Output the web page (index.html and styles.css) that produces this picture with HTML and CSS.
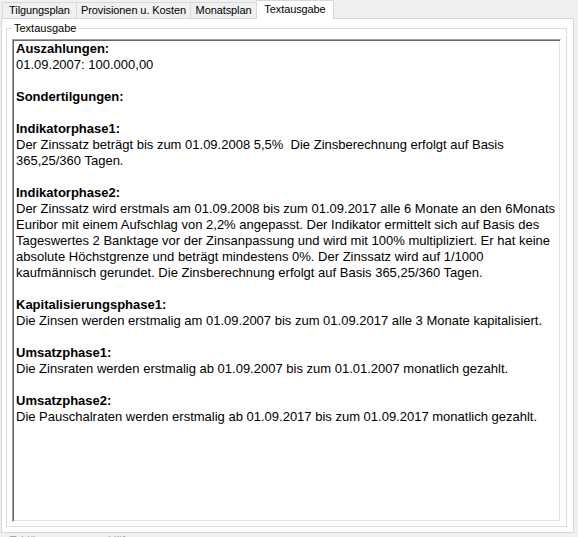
FILE: index.html
```html
<!DOCTYPE html>
<html>
<head>
<meta charset="utf-8">
<link rel="stylesheet" href="styles.css">
</head>
<body>
<div class="tabs">
  <div class="tab tab-tilgung">Tilgungsplan</div>
  <div class="tab tab-prov">Provisionen u. Kosten</div>
  <div class="tab tab-monat">Monatsplan</div>
  <div class="tab active">Textausgabe</div>
</div>
<div class="panel">
  <fieldset class="group">
    <legend>Textausgabe</legend>
    <div class="textbox"><b>Auszahlungen:</b>
01.09.2007: 100.000,00

<b>Sondertilgungen:</b>

<b>Indikatorphase1:</b>
Der Zinssatz beträgt bis zum 01.09.2008 5,5%  Die Zinsberechnung erfolgt auf Basis
365,25/360 Tagen.

<b>Indikatorphase2:</b>
Der Zinssatz wird erstmals am 01.09.2008 bis zum 01.09.2017 alle 6 Monate an den 6Monats
Euribor mit einem Aufschlag von 2,2% angepasst. Der Indikator ermittelt sich auf Basis des
Tageswertes 2 Banktage vor der Zinsanpassung und wird mit 100% multipliziert. Er hat keine
absolute Höchstgrenze und beträgt mindestens 0%. Der Zinssatz wird auf 1/1000
kaufmännisch gerundet. Die Zinsberechnung erfolgt auf Basis 365,25/360 Tagen.

<b>Kapitalisierungsphase1:</b>
Die Zinsen werden erstmalig am 01.09.2007 bis zum 01.09.2017 alle 3 Monate kapitalisiert.

<b>Umsatzphase1:</b>
Die Zinsraten werden erstmalig ab 01.09.2007 bis zum 01.01.2007 monatlich gezahlt.

<b>Umsatzphase2:</b>
Die Pauschalraten werden erstmalig ab 01.09.2017 bis zum 01.09.2017 monatlich gezahlt.</div>
  </fieldset>
</div>
<div class="footer"><span>Erklärungen</span><span>Hilfe</span></div>
</body>
</html>
```
FILE: styles.css
```css
html, body {
  margin: 0;
  padding: 0;
  background: #f0f0f0;
  font-family: "Liberation Sans", Arial, sans-serif;
  color: #000;
  overflow: hidden;
}
.tabs {
  display: flex;
  align-items: flex-end;
  height: 18px;
  padding-left: 2px;
}
.tab {
  height: 16px;
  line-height: 15px;
  font-size: 11px;
  letter-spacing: -0.1px;
  text-align: center;
  border: 1px solid #d9d9d9;
  border-bottom: none;
  border-right: none;
  background: #f0f0f0;
  box-sizing: border-box;
  white-space: nowrap;
}
.tab-tilgung { width: 74px; }
.tab-prov { width: 114px; }
.tab-monat { width: 66px; }
.tab.active {
  width: 78px;
  height: 19px;
  line-height: 17px;
  background: #ffffff;
  border-right: 1px solid #d9d9d9;
  margin-bottom: -1px;
  position: relative;
  z-index: 1;
}
.panel {
  margin-left: 1px;
  width: 561px;
  height: 509px;
  background: #ffffff;
  border: 1px solid #d9d9d9;
  padding: 2px 6px 2px 4px;
  box-sizing: content-box;
}
.group {
  margin: 0;
  min-width: 0;
  border: 1px solid #dcdcdc;
  padding: 0 5px 4px 5px;
  height: 506px;
  box-sizing: border-box;
  display: flex;
  flex-direction: column;
}
.group legend {
  font-size: 11px;
  line-height: 14px;
  padding: 0 2px;
  margin-left: 0;
}
.textbox {
  margin-top: 4px;
  flex: 1;
  border-style: solid;
  border-width: 1px;
  border-color: #a0a0a0 #ffffff #ffffff #a0a0a0;
  box-shadow: inset 1px 1px 0 #696969, inset -1px -1px 0 #e3e3e3;
  padding: 1px 2px 0 3px;
  font-size: 13px;
  line-height: 16px;
  white-space: pre;
  overflow: hidden;
  background: #fff;
}
.textbox b {
  font-weight: bold;
}
.footer {
  display: flex;
  gap: 34px;
  padding: 1px 0 0 9px;
  font-size: 12px;
  color: #a8a8a8;
}
```
